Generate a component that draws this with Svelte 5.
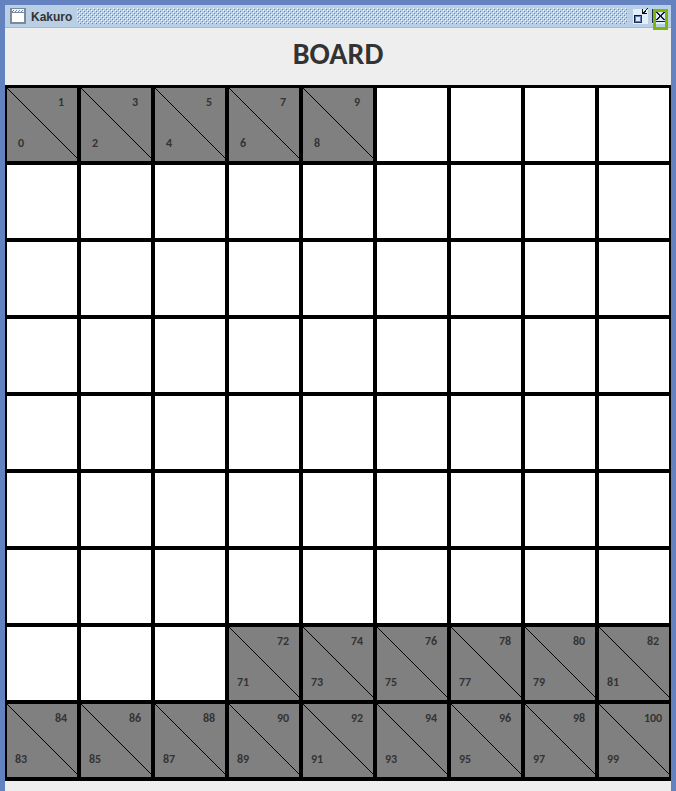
<script>
  const rows = 9;
  const cols = 9;
  const cells = Array.from({ length: rows * cols }, (_, i) => {
    if (i < 5) return { down: 2 * i, across: 2 * i + 1 };
    if (i >= 66) return { down: 71 + (i - 66) * 2, across: 72 + (i - 66) * 2 };
    return null;
  });
</script>

<div class="window">
  <header class="titlebar">
    <svg class="app-icon" width="16" height="16" shape-rendering="crispEdges">
      <rect width="16" height="16" rx="1" fill="#7a8a99" />
      <rect x="2" y="1" width="12" height="3" fill="#f4f8fc" />
      <path d="M3 2.5h1M6 2.5h1M9 2.5h1M12 2.5h1M2 3.5h1M5 3.5h1M8 3.5h1M11 3.5h1" stroke="#6382bf" />
      <rect x="2" y="5" width="12" height="9" fill="#fff" />
    </svg>
    <span class="name">Kakuro</span>
    <svg class="bumps" height="16" shape-rendering="crispEdges">
      <defs>
        <pattern id="dots" width="4" height="4" patternUnits="userSpaceOnUse">
          <path d="M0 0.5h1M2 2.5h1" stroke="#ffffff" />
          <path d="M1 1.5h1M3 3.5h1" stroke="#6382bf" />
        </pattern>
      </defs>
      <rect width="100%" height="16" fill="url(#dots)" />
    </svg>
    <svg class="controls" width="39" height="23" shape-rendering="crispEdges">
      <rect x="1" y="4" width="15" height="15" fill="#e4eef8" />
      <rect x="2" y="10" width="8" height="8" fill="#1c3566" />
      <rect x="3" y="11" width="6" height="6" fill="#5f7fb5" />
      <path d="M2 10.5h7M2.5 10v7" stroke="#111a30" />
      <rect x="4" y="12" width="4" height="4" fill="#dce8f4" />
      <path d="M10.5 4v4.5h4M11 7.5h2M12 6.5h2M13 5.5h1M14 4.5h1M15 3.5h1" fill="none" stroke="#111" />
      <rect x="20" y="4" width="15" height="15" fill="#e4eef8" />
      <path d="M20.5 4v14" stroke="#222c44" />
      <rect x="22" y="5" width="12" height="12" fill="#dce8f4" />
      <path d="M24 7.5h2M31 7.5h2M25 8.5h2M30 8.5h2M26 9.5h2M29 9.5h2M27 10.5h3M27 11.5h3M26 12.5h2M29 12.5h2M25 13.5h2M30 13.5h2M24 14.5h2M31 14.5h2M24 16.5h9" stroke="#111a30" />
      <rect x="22.5" y="5.5" width="12" height="18" fill="none" stroke="#7ab510" stroke-width="3" />
    </svg>
  </header>
  <h1>BOARD</h1>
  <main class="board">
    {#each cells as cell}
      <div class="cell" class:clue={cell}>
        {#if cell}
          <svg width="70" height="70" shape-rendering="crispEdges"><path d="M0 0L70 70" stroke="#000" /></svg>
          <span class="across">{cell.across}</span>
          <span class="down">{cell.down}</span>
        {/if}
      </div>
    {/each}
  </main>
</div>

<style>
  .window {
    box-sizing: border-box;
    width: 676px;
    height: 791px;
    overflow: hidden;
    padding: 5px 5px 0;
    background: linear-gradient(#eee, #eee) content-box, #6382bf;
    color: #333;
  }
  .titlebar {
    box-sizing: border-box;
    display: flex;
    height: 23px;
    padding-left: 5px;
    background: #b8cfe5;
    border-bottom: 1px solid #a3b8cc;
  }
  .app-icon { margin-top: 3px; }
  .name {
    width: 46px;
    padding-left: 5px;
    white-space: nowrap;
    font: bold 12px/24px "Liberation Sans", sans-serif;
  }
  .bumps { flex: 1; min-width: 0; margin: 3px 5px 0 0; }
  .controls { flex: none; overflow: visible; }
  h1 {
    height: 57px;
    margin: 0;
    text-align: center;
    font: bold 30px/52px "Carlito", "Lato", sans-serif;
  }
  .board {
    display: grid;
    grid-template-columns: repeat(9, 74px);
    grid-auto-rows: 77px;
    padding: 1px 0 2px;
    background: #000;
  }
  .cell {
    position: relative;
    box-sizing: border-box;
    border: 2px solid #000;
    background: #fff;
    font: bold 12px/14px "Carlito", "Lato", sans-serif;
  }
  .clue { background: #808080; }
  .cell svg { display: block; }
  .across, .down { position: absolute; width: 30px; text-align: center; }
  .across { right: 1px; top: 7px; }
  .down { left: -1px; top: 48px; }
</style>
